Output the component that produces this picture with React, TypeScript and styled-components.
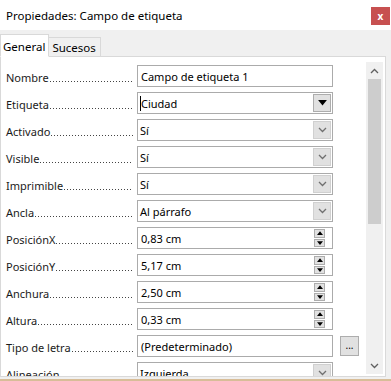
import React from "react";
import styled, { createGlobalStyle } from "styled-components";

const Global = createGlobalStyle`
  body {
    margin: 0;
    background: #f0f0f0;
  }
`;

const Window = styled.div`
  width: 391px;
  height: 381px;
  overflow: hidden;
  background: #f0f0f0;
  font-family: "Noto Sans", "Open Sans", sans-serif;
  font-size: 11px;
  color: #000;
  display: flex;
  flex-direction: column;
  padding-bottom: 2px;
  border-bottom: 2px solid #d8bd98;
  box-sizing: border-box;
`;

const TitleBar = styled.div`
  height: 30px;
  flex: 0 0 30px;
  background: #fff;
  display: flex;
  align-items: center;
  justify-content: space-between;
  padding-left: 6px;
  font-size: 11.5px;
`;

const Close = styled.div`
  width: 19px;
  height: 18px;
  margin-right: 1px;
  margin-top: 2px;
  background: #c75050;
  color: #fff;
  font-size: 10px;
  font-weight: bold;
  display: flex;
  align-items: center;
  justify-content: center;
`;

const Tabs = styled.div`
  display: flex;
  align-items: flex-end;
  height: 26px;
  flex: 0 0 26px;
`;

const Tab = styled.div<{ $active?: boolean }>`
  height: ${(p) => (p.$active ? "23px" : "19px")};
  box-sizing: border-box;
  padding: ${(p) => (p.$active ? "2px 3px 0 2px" : "0 4px 0 3px")};
  display: flex;
  align-items: center;
  font-size: 11.5px;
  background: ${(p) => (p.$active ? "#fff" : "#f0f0f0")};
  border: 1px solid #d9d9d9;
  border-bottom: ${(p) => (p.$active ? "1px solid #fff" : "none")};
  margin-bottom: ${(p) => (p.$active ? "-1px" : "0")};
  position: relative;
  z-index: ${(p) => (p.$active ? 1 : 0)};
  margin-left: ${(p) => (p.$active ? "0" : "-1px")};
`;

const Panel = styled.div`
  flex: 1;
  margin-right: 5px;
  background: #fff;
  border: 1px solid #d9d9d9;
  display: flex;
  overflow: hidden;
`;

const Rows = styled.div`
  flex: 1;
  padding: 8px 0 0 5px;
  display: flex;
  flex-direction: column;
  gap: 5px;
  overflow: hidden;
`;

const Row = styled.div`
  display: flex;
  align-items: center;
  height: 22px;
  flex: 0 0 22px;
`;

const Label = styled.div`
  width: 127px;
  flex: 0 0 127px;
  margin-right: 4px;
  display: flex;
  align-items: baseline;
  white-space: nowrap;
  color: #1a1a1a;
  padding-top: 3px;
`;

const Leader = styled.span`
  flex: 1;
  height: 1px;
  margin-left: 1px;
  background-image: linear-gradient(to right, #444 1px, transparent 1px);
  background-size: 3px 1px;
  background-repeat: repeat-x;
`;

const Field = styled.div<{ $pad: number }>`
  width: 196px;
  height: 22px;
  box-sizing: border-box;
  border: 1px solid #ababab;
  display: flex;
  align-items: center;
  padding-left: ${(p) => p.$pad}px;
  white-space: nowrap;
  overflow: hidden;
`;

const Value = styled.span`
  flex: 1;
  display: flex;
  align-items: center;
`;

const Caret = styled.span`
  width: 1px;
  height: 15px;
  background: #000;
`;

const DropButton = styled.div<{ $dark?: boolean }>`
  width: 18px;
  height: 18px;
  margin-right: 1px;
  background: #e1e1e1;
  border: 1px solid ${(p) => (p.$dark ? "#adadad" : "#d0d0d0")};
  box-sizing: border-box;
  display: flex;
  align-items: center;
  justify-content: center;
`;

const Spin = styled.div`
  width: 11px;
  height: 18px;
  margin-right: 7px;
  display: flex;
  flex-direction: column;
  gap: 1px;
`;

const SpinHalf = styled.div`
  flex: 1;
  background: #e1e1e1;
  border: 1px solid #adadad;
  box-sizing: border-box;
  display: flex;
  align-items: center;
  justify-content: center;
`;

const Ellipsis = styled.div`
  width: 19px;
  height: 20px;
  margin-left: 7px;
  box-sizing: border-box;
  border: 1px solid #adadad;
  background: #e1e1e1;
  display: flex;
  align-items: center;
  justify-content: center;
  font-size: 10px;
  padding-bottom: 2px;
`;

const ScrollBar = styled.div`
  width: 17px;
  flex: 0 0 17px;
  margin: 5px 2px 2px 0;
  background: #f0f0f0;
  display: flex;
  flex-direction: column;
`;

const ScrollArrow = styled.div`
  height: 17px;
  flex: 0 0 17px;
  display: flex;
  align-items: center;
  justify-content: center;
`;

const Thumb = styled.div`
  height: 145px;
  margin: 0 2px;
  background: #cdcdcd;
`;

const Track = styled.div`
  flex: 1;
`;

const Chevron = ({ up, color = "#606060" }: { up?: boolean; color?: string }) => (
  <svg width="9" height="6" viewBox="0 0 9 6">
    <path
      d={up ? "M1 5 L4.5 1.5 L8 5" : "M1 1 L4.5 4.5 L8 1"}
      fill="none"
      stroke={color}
      strokeWidth="1.3"
    />
  </svg>
);

const Triangle = ({ up, size = 8 }: { up?: boolean; size?: number }) => (
  <svg width={size} height={size / 2 + 1} viewBox="0 0 8 5">
    <path d={up ? "M0 5 L4 0 L8 5 Z" : "M0 0 L8 0 L4 5 Z"} fill="#000" />
  </svg>
);

type Kind = "text" | "combo" | "list" | "spin" | "font";

const rows: { label: string; value: string; kind: Kind }[] = [
  { label: "Nombre", value: "Campo de etiqueta 1", kind: "text" },
  { label: "Etiqueta", value: "Ciudad", kind: "combo" },
  { label: "Activado", value: "Sí", kind: "list" },
  { label: "Visible", value: "Sí", kind: "list" },
  { label: "Imprimible", value: "Sí", kind: "list" },
  { label: "Ancla", value: "Al párrafo", kind: "list" },
  { label: "PosiciónX", value: "0,83 cm", kind: "spin" },
  { label: "PosiciónY", value: "5,17 cm", kind: "spin" },
  { label: "Anchura", value: "2,50 cm", kind: "spin" },
  { label: "Altura", value: "0,33 cm", kind: "spin" },
  { label: "Tipo de letra", value: "(Predeterminado)", kind: "font" },
  { label: "Alineación", value: "Izquierda", kind: "list" },
];

const PropRow = ({ label, value, kind }: { label: string; value: string; kind: Kind }) => (
  <Row>
    <Label>
      {label}
      <Leader />
    </Label>
    <Field $pad={kind === "list" || kind === "combo" ? 2 : 3}>
      <Value>
        {kind === "combo" && <Caret />}
        {value}
      </Value>
      {kind === "combo" && (
        <DropButton $dark>
          <Triangle size={9} />
        </DropButton>
      )}
      {kind === "list" && (
        <DropButton>
          <Chevron color="#707070" />
        </DropButton>
      )}
      {kind === "spin" && (
        <Spin>
          <SpinHalf>
            <Triangle up size={6} />
          </SpinHalf>
          <SpinHalf>
            <Triangle size={6} />
          </SpinHalf>
        </Spin>
      )}
    </Field>
    {kind === "font" && <Ellipsis>...</Ellipsis>}
  </Row>
);

export default function App() {
  return (
    <Window>
      <Global />
      <TitleBar>
        <span>Propiedades: Campo de etiqueta</span>
        <Close>x</Close>
      </TitleBar>
      <Tabs>
        <Tab $active>General</Tab>
        <Tab>Sucesos</Tab>
      </Tabs>
      <Panel>
        <Rows>
          {rows.map((r) => (
            <PropRow key={r.label} {...r} />
          ))}
        </Rows>
        <ScrollBar>
          <ScrollArrow>
            <Chevron up />
          </ScrollArrow>
          <Thumb />
          <Track />
          <ScrollArrow>
            <Chevron />
          </ScrollArrow>
        </ScrollBar>
      </Panel>
    </Window>
  );
}
